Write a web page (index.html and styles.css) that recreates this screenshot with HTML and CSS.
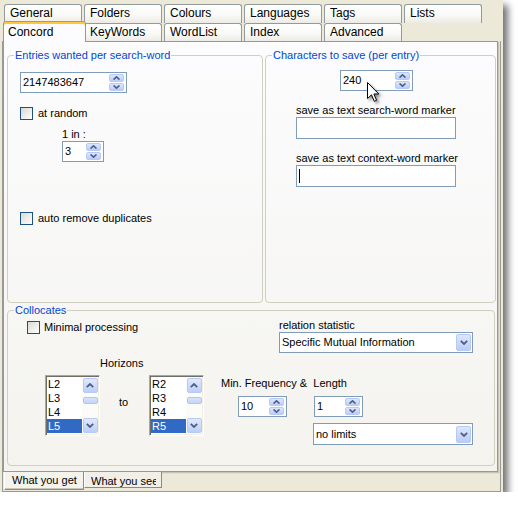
FILE: index.html
```html
<!DOCTYPE html>
<html>
<head>
<meta charset="utf-8">
<link rel="stylesheet" href="styles.css">
</head>
<body>
<div class="dialog">
  <div class="tabrow row1">
    <div class="tab">General</div>
    <div class="tab">Folders</div>
    <div class="tab">Colours</div>
    <div class="tab">Languages</div>
    <div class="tab">Tags</div>
    <div class="tab">Lists</div>
  </div>
  <div class="tabrow row2">
    <div class="tab sel">Concord</div>
    <div class="tab">KeyWords</div>
    <div class="tab">WordList</div>
    <div class="tab">Index</div>
    <div class="tab">Advanced</div>
  </div>
  <div class="frame">
    <div class="panel">
      <div class="toprow">
        <fieldset class="grp g-entries">
          <legend>Entries wanted per search-word</legend>
          <div class="spin spin-big">
            <span class="val">2147483647</span>
            <span class="btns">
              <span class="sb"><svg width="7" height="4" viewBox="0 0 7 4"><path d="M0.5 3.6 L3.5 0.8 L6.5 3.6" fill="none" stroke="#4D6185" stroke-width="1.6"/></svg></span>
              <span class="sb"><svg width="7" height="4" viewBox="0 0 7 4"><path d="M0.5 0.4 L3.5 3.2 L6.5 0.4" fill="none" stroke="#4D6185" stroke-width="1.6"/></svg></span>
            </span>
          </div>
          <div class="check c-random"><span class="cb"></span><span class="lbl">at random</span></div>
          <div class="oneinlbl">1 in :</div>
          <div class="spin spin-three">
            <span class="val">3</span>
            <span class="btns">
              <span class="sb"><svg width="7" height="4" viewBox="0 0 7 4"><path d="M0.5 3.6 L3.5 0.8 L6.5 3.6" fill="none" stroke="#4D6185" stroke-width="1.6"/></svg></span>
              <span class="sb"><svg width="7" height="4" viewBox="0 0 7 4"><path d="M0.5 0.4 L3.5 3.2 L6.5 0.4" fill="none" stroke="#4D6185" stroke-width="1.6"/></svg></span>
            </span>
          </div>
          <div class="check c-dup"><span class="cb"></span><span class="lbl">auto remove duplicates</span></div>
        </fieldset>
        <fieldset class="grp g-chars">
          <legend>Characters to save (per entry)</legend>
          <div class="spin spin-240">
            <span class="val">240</span>
            <span class="btns">
              <span class="sb"><svg width="7" height="4" viewBox="0 0 7 4"><path d="M0.5 3.6 L3.5 0.8 L6.5 3.6" fill="none" stroke="#4D6185" stroke-width="1.6"/></svg></span>
              <span class="sb"><svg width="7" height="4" viewBox="0 0 7 4"><path d="M0.5 0.4 L3.5 3.2 L6.5 0.4" fill="none" stroke="#4D6185" stroke-width="1.6"/></svg></span>
            </span>
          </div>
          <div class="mlbl">save as text search-word marker</div>
          <div class="edit"></div>
          <div class="mlbl">save as text context-word marker</div>
          <div class="edit"><span class="caret"></span></div>
        </fieldset>
      </div>
      <fieldset class="grp g-colloc">
        <legend>Collocates</legend>
        <div class="rowa">
          <div class="ra-left">
            <div class="check c-min"><span class="cb"></span><span class="lbl">Minimal processing</span></div>
          </div>
          <div class="ra-right">
            <div class="rlbl">relation statistic</div>
            <div class="combo c-rel">
              <span class="val">Specific Mutual Information</span>
              <span class="carrow"><svg width="8" height="5" viewBox="0 0 8 5"><path d="M0.8 0.8 L4 4 L7.2 0.8" fill="none" stroke="#4D6185" stroke-width="1.8"/></svg></span>
            </div>
          </div>
        </div>
        <div class="rowb">
          <div class="hz">
            <div class="hzlbl">Horizons</div>
            <div class="lists">
              <div class="list">
                <div class="items">
                  <div class="item">L2</div>
                  <div class="item">L3</div>
                  <div class="item">L4</div>
                  <div class="item sel">L5</div>
                </div>
                <div class="vscroll">
                  <span class="scb"><svg width="8" height="5" viewBox="0 0 8 5"><path d="M0.8 4.2 L4 1 L7.2 4.2" fill="none" stroke="#4D6185" stroke-width="1.8"/></svg></span>
                  <span class="thumb"></span>
                  <span class="track"></span>
                  <span class="scb"><svg width="8" height="5" viewBox="0 0 8 5"><path d="M0.8 0.8 L4 4 L7.2 0.8" fill="none" stroke="#4D6185" stroke-width="1.8"/></svg></span>
                </div>
              </div>
              <div class="to">to</div>
              <div class="list">
                <div class="items">
                  <div class="item">R2</div>
                  <div class="item">R3</div>
                  <div class="item">R4</div>
                  <div class="item sel">R5</div>
                </div>
                <div class="vscroll">
                  <span class="scb"><svg width="8" height="5" viewBox="0 0 8 5"><path d="M0.8 4.2 L4 1 L7.2 4.2" fill="none" stroke="#4D6185" stroke-width="1.8"/></svg></span>
                  <span class="thumb"></span>
                  <span class="track"></span>
                  <span class="scb"><svg width="8" height="5" viewBox="0 0 8 5"><path d="M0.8 0.8 L4 4 L7.2 0.8" fill="none" stroke="#4D6185" stroke-width="1.8"/></svg></span>
                </div>
              </div>
            </div>
          </div>
          <div class="freq">
            <div class="flbl">Min. Frequency &amp;  Length</div>
            <div class="spins">
              <div class="spin spin-small s10">
                <span class="val">10</span>
                <span class="btns">
                  <span class="sb"><svg width="7" height="4" viewBox="0 0 7 4"><path d="M0.5 3.6 L3.5 0.8 L6.5 3.6" fill="none" stroke="#4D6185" stroke-width="1.6"/></svg></span>
                  <span class="sb"><svg width="7" height="4" viewBox="0 0 7 4"><path d="M0.5 0.4 L3.5 3.2 L6.5 0.4" fill="none" stroke="#4D6185" stroke-width="1.6"/></svg></span>
                </span>
              </div>
              <div class="spin spin-small s1">
                <span class="val">1</span>
                <span class="btns">
                  <span class="sb"><svg width="7" height="4" viewBox="0 0 7 4"><path d="M0.5 3.6 L3.5 0.8 L6.5 3.6" fill="none" stroke="#4D6185" stroke-width="1.6"/></svg></span>
                  <span class="sb"><svg width="7" height="4" viewBox="0 0 7 4"><path d="M0.5 0.4 L3.5 3.2 L6.5 0.4" fill="none" stroke="#4D6185" stroke-width="1.6"/></svg></span>
                </span>
              </div>
            </div>
            <div class="combo c-lim">
              <span class="val">no limits</span>
              <span class="carrow"><svg width="8" height="5" viewBox="0 0 8 5"><path d="M0.8 0.8 L4 4 L7.2 0.8" fill="none" stroke="#4D6185" stroke-width="1.8"/></svg></span>
            </div>
          </div>
        </div>
      </fieldset>
    </div>
    <div class="btabs">
      <div class="btab bsel">What you get</div>
      <div class="btab"><span class="clip">What you see</span></div>
    </div>
  </div>
  <svg class="cursor" width="13" height="21" viewBox="0 0 13 21">
    <path d="M0.5 0.5 L0.5 16.5 L4.5 12.8 L7.3 19.3 L9.6 18.3 L6.9 12 L11.8 12 Z" fill="#fff" stroke="#000" stroke-width="1" stroke-linejoin="miter"/>
  </svg>
</div>
</body>
</html>
```
FILE: styles.css
```css
* { box-sizing: border-box; }

body {
  margin: 0;
  background: #ffffff;
  font: 11px "Liberation Sans", Arial, sans-serif;
  color: #000;
}

.dialog {
  position: relative;
  width: 503px;
  height: 492px;
  background: #ECE9D8;
  box-shadow: 5px 5px 7px rgba(0, 0, 0, 0.55);
}

/* top tab rows */
.tabrow {
  display: flex;
  gap: 2px;
  margin-left: 4px;
  font-size: 12px;
}
.row1 { padding-top: 4px; height: 23px; }
.row2 { height: 18px; align-items: flex-start; }

.tab {
  width: 78px;
  border: 1px solid #919B9C;
  border-bottom: 0;
  border-radius: 3px 3px 0 0;
  background: linear-gradient(#FFFFFF, #F9F9F7 55%, #ECEBE5);
  padding-left: 5px;
  line-height: 17px;
  white-space: nowrap;
}
.row2 .tab { height: 18px; }
.row2 .tab.sel {
  position: relative;
  z-index: 2;
  width: 83px;
  height: 21px;
  margin: -2px -4px -1px -1px;
  background: #FCFCFE;
  border-top: 1px solid #E68B2C;
  box-shadow: inset 0 2px 0 #FFC73C;
  padding-left: 4px;
  line-height: 20px;
}

/* frame & panel */
.frame {
  margin-left: 2px;
  width: 499px;
  height: 451px;
  border: 1px solid #9A9A96;
  border-top: 0;
}
.panel {
  width: 495px;
  height: 431px;
  border: 1px solid #919B9C;
  background: linear-gradient(#FCFCFE, #F4F3EE);
  box-shadow: 1px 1px 0 #C6C3B4, 2px 2px 0 #E2DFD2;
  padding: 6px 0 0 3px;
}

.toprow {
  display: flex;
  gap: 2px;
}

fieldset.grp {
  margin: 0;
  padding: 0;
  border: 1px solid #D0D0BF;
  border-radius: 4px;
  min-width: 0;
}
fieldset.grp legend {
  color: #0046D5;
  padding: 0 1px;
  margin-left: 6px;
  line-height: 14px;
}

.g-entries { width: 256px; height: 255px; }
.g-chars { width: 231px; height: 255px; }
.g-colloc { width: 488px; height: 163px; margin-top: 1px; }

/* spin edits */
.spin {
  display: flex;
  align-items: center;
  justify-content: space-between;
  height: 21px;
  border: 1px solid #7F9DB9;
  background: #fff;
  padding-left: 2px;
}
.spin .val { line-height: 19px; }
.btns {
  display: flex;
  flex-direction: column;
  gap: 1px;
  margin-right: 2px;
}
.sb {
  display: flex;
  align-items: center;
  justify-content: center;
  width: 15px;
  height: 8px;
  border: 1px solid #B7CAF5;
  border-radius: 2px;
  background: linear-gradient(#DDE6FD, #BACDF8);
}
.sb svg { display: block; }

.spin-big { width: 107px; margin: 10px 0 0 12px; }
.spin-three { width: 42px; margin-left: 54px; }
.spin-240 { width: 73px; margin: 8px 0 0 74px; }
.spin-small { width: 49px; }

/* checkboxes */
.check {
  display: flex;
  align-items: center;
  height: 13px;
}
.cb {
  width: 13px;
  height: 13px;
  flex: none;
  border: 1px solid #1C5180;
  background: linear-gradient(135deg, #D9D9D3, #FFFFFF);
}
.check .lbl { margin-left: 5px; line-height: 13px; white-space: nowrap; }

.c-random { margin: 14px 0 0 12px; }
.oneinlbl { margin: 7px 0 0 54px; line-height: 14px; }
.c-dup { margin: 50px 0 0 12px; }

/* right group */
.mlbl { margin: 12px 0 0 30px; line-height: 14px; }
.edit {
  width: 160px;
  height: 22px;
  margin-left: 30px;
  border: 1px solid #7F9DB9;
  background: #fff;
}
.caret {
  display: block;
  width: 1px;
  height: 14px;
  margin: 3px 0 0 2px;
  background: #000;
}

/* collocates */
.rowa { display: flex; height: 36px; }
.ra-left { width: 271px; }
.c-min { margin: 4px 0 0 19px; }
.c-min .lbl { margin-left: 4px; }
.rlbl { margin-top: 1px; line-height: 14px; }

.combo {
  display: flex;
  align-items: center;
  justify-content: space-between;
  height: 21px;
  border: 1px solid #7F9DB9;
  background: #fff;
  padding-left: 2px;
}
.combo .val { line-height: 19px; }
.carrow {
  display: flex;
  align-items: center;
  justify-content: center;
  width: 15px;
  height: 17px;
  margin-right: 1px;
  border: 1px solid #B7CAF5;
  border-radius: 2px;
  background: linear-gradient(#DDE6FD, #BACDF8);
}
.carrow svg, .scb svg { display: block; }
.c-rel { width: 194px; }
.c-lim { width: 160px; height: 22px; margin: 6px 0 0 92px; }

.rowb { display: flex; }
.hz { margin-left: 37px; }
.hzlbl { margin: 3px 0 0 55px; line-height: 14px; }
.lists { display: flex; margin-top: 5px; }
.list {
  display: flex;
  width: 55px;
  height: 61px;
  border: 1px solid;
  border-color: #ACA899 #FFFFFF #FFFFFF #ACA899;
  box-shadow: inset 1px 1px 0 #716F64, inset -1px -1px 0 #F1EFE2;
  padding: 1px;
  background: #fff;
}
.items { width: 35px; background: #fff; }
.item { height: 14px; line-height: 14px; padding-left: 1px; }
.item.sel { background: #316AC5; color: #fff; }
.vscroll {
  width: 16px;
  display: flex;
  flex-direction: column;
  align-items: center;
  background: #FBFBF8;
  padding: 1px 0;
}
.scb {
  display: flex;
  align-items: center;
  justify-content: center;
  width: 15px;
  height: 15px;
  flex: none;
  border: 1px solid #B7CAF5;
  border-radius: 2px;
  background: linear-gradient(#E1E9FD, #BCCEF8);
}
.thumb {
  width: 15px;
  height: 7px;
  margin-top: 4px;
  border: 1px solid #B1C5F3;
  border-radius: 2px;
  background: linear-gradient(#D9E3FC, #C3D4FA);
}
.track { flex: 1; }
.to { width: 49px; padding: 20px 0 0 19px; line-height: 14px; }

.freq { margin-left: 17px; }
.flbl { margin-top: 23px; line-height: 14px; white-space: pre; }
.spins { display: flex; margin-top: 6px; }
.s10 { margin-left: 17px; }
.s1 { margin-left: 27px; }

/* bottom tabs */
.btabs { display: flex; margin-left: 1px; }
.btab {
  width: 78px;
  height: 16px;
  border: 1px solid #8D8B80;
  border-top: 0;
  border-left-color: #FFFFFF;
  background: #F1EFE7;
  padding: 1px 0 0 6px;
  line-height: 16px;
  white-space: nowrap;
}
.btab.bsel {
  width: 80px;
  height: 18px;
  background: #F4F3EE;
  padding: 0 0 0 7px;
  line-height: 17px;
  box-shadow: inset 0 -1px 0 #C9C6B8;
}
.clip {
  display: block;
  width: 65px;
  overflow: hidden;
}

.cursor {
  position: absolute;
  left: 367px;
  top: 82px;
  filter: drop-shadow(2px 2px 1.5px rgba(0, 0, 0, 0.45));
}
```
